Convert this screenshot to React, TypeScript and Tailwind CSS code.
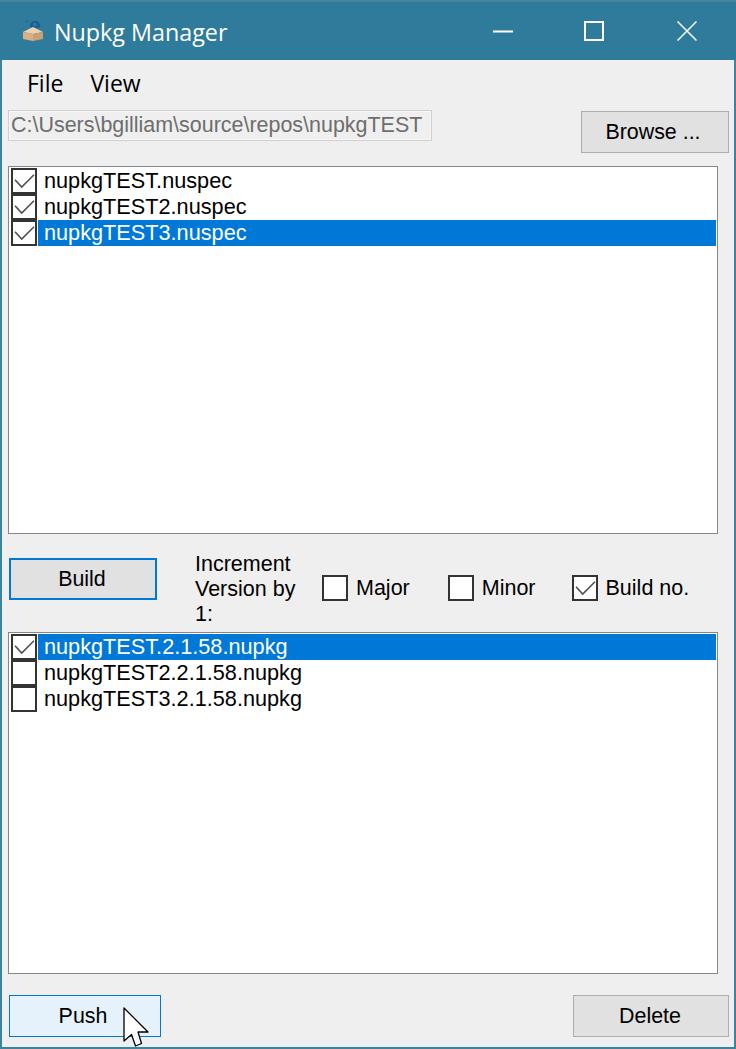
import React from "react";

const sans = "font-['Liberation_Sans',Arial,sans-serif]";

function CheckBox({ checked, white = true }: { checked?: boolean; white?: boolean }) {
  return (
    <span className={`flex h-[26px] w-[26px] shrink-0 items-center justify-center border-2 border-[#333333] ${white ? "bg-white" : ""}`}>
      {checked && (
        <svg width="22" height="22" viewBox="0 0 22 22" fill="none">
          <path d="M2 9.7 L8.7 17 L21 4.7" stroke="#505050" strokeWidth="1.6" />
        </svg>
      )}
    </span>
  );
}

function ListBox({ items, className }: { items: { label: string; checked: boolean; selected: boolean }[]; className: string }) {
  return (
    <div className={`ml-[6px] w-[710px] border border-[#828790] bg-white py-px pl-[2px] pr-px ${className}`}>
      {items.map((it) => (
        <div key={it.label} className="flex h-[26px] items-stretch">
          <CheckBox checked={it.checked} />
          <div className={`ml-px flex-1 pl-[6px] text-[21.7px] leading-[26px] ${it.selected ? "bg-[#0078d7] text-white" : "text-black"}`}>{it.label}</div>
        </div>
      ))}
    </div>
  );
}

function Option({ label, checked, className }: { label: string; checked?: boolean; className: string }) {
  return (
    <div className={`flex items-center gap-2 text-[21.5px] leading-[26px] text-black ${className}`}>
      <CheckBox checked={checked} />
      <span>{label}</span>
    </div>
  );
}

export default function App() {
  return (
    <div className={`flex h-[1049px] w-[736px] flex-col border-x-2 border-b-2 border-[#3a84a2] bg-[#efefef] ${sans}`}>
      <header className="-mx-[2px] flex h-[60px] shrink-0 items-center border-t-2 border-[#45869f] bg-[#2f7b9b] pr-[39px] text-white">
        <svg className="mb-[3px] ml-[23px]" width="20" height="22" viewBox="0 0 20 22">
          <circle cx="4" cy="2.5" r="1" fill="#1f5f95" />
          <path d="M7 7 C7 3 10 2 13 2 C16 2 17 5 17 8 L14 9 L7 8 Z" fill="#175d96" />
          <path d="M10 4 L13 4 L14 7 L10 7 Z" fill="#2f7b9b" />
          <path d="M0 13 L10 8 L20 13 L10 15 Z" fill="#ecd2ac" />
          <path d="M0 13 L10 15 L10 22 L0 20 Z" fill="#d9b083" />
          <path d="M10 15 L20 13 L20 20 L10 22 Z" fill="#c9a076" />
        </svg>
        <span className="ml-[11px] pt-[3px] font-['Open_Sans',sans-serif] text-[23.3px] leading-none">Nupkg Manager</span>
        <svg className="ml-auto" width="20" height="3" viewBox="0 0 20 3"><rect width="20" height="2" y="0.5" fill="#fff" /></svg>
        <span className="ml-[71px] h-[20px] w-[20px] border-2 border-white" />
        <svg className="ml-[73px]" width="20" height="20" viewBox="0 0 20 20" fill="none">
          <path d="M0.5 0.5 L19.5 19.5 M19.5 0.5 L0.5 19.5" stroke="#fff" strokeWidth="1.5" />
        </svg>
      </header>

      <nav className="flex h-[48px] shrink-0 items-center pb-[2px] pl-[25px] font-['Open_Sans',sans-serif] text-[23px] leading-none text-black">
        <span>File</span>
        <span className="ml-[27px]">View</span>
      </nav>

      <div className="flex h-[45px] shrink-0 items-start pl-[6px]">
        <div className="mt-[2px] flex h-[31px] w-[424px] items-center whitespace-nowrap border border-[#d0d0d0] pl-[2px] text-[21.46px] text-[#6d6d6d] shadow-[inset_0_0_0_1px_#f7f7f7]">
          C:\Users\bgilliam\source\repos\nupkgTEST
        </div>
        <button className="ml-[149px] mt-[3px] h-[42px] w-[148px] border border-[#adadad] bg-[#e1e1e1] pr-[4px] text-[21.4px] text-black">Browse ...</button>
      </div>

      <ListBox
        className="mt-[13px] h-[368px] shrink-0"
        items={[
          { label: "nupkgTEST.nuspec", checked: true, selected: false },
          { label: "nupkgTEST2.nuspec", checked: true, selected: false },
          { label: "nupkgTEST3.nuspec", checked: true, selected: true },
        ]}
      />

      <div className="flex h-[98px] shrink-0 items-start pl-[7px]">
        <button className="mt-[24px] h-[42px] w-[148px] border-2 border-[#0078d7] bg-[#e1e1e1] pr-[2px] text-[21.4px] text-black">Build</button>
        <div className="ml-[38px] mt-[18px] w-[110px] text-[21.5px] leading-[25px] text-black">Increment Version by 1:</div>
        <Option label="Major" className="ml-[17px] mt-[41px]" />
        <Option label="Minor" className="ml-[38px] mt-[41px]" />
        <Option label="Build no." checked className="ml-[36px] mt-[41px]" />
      </div>

      <ListBox
        className="h-[342px] shrink-0"
        items={[
          { label: "nupkgTEST.2.1.58.nupkg", checked: true, selected: true },
          { label: "nupkgTEST2.2.1.58.nupkg", checked: false, selected: false },
          { label: "nupkgTEST3.2.1.58.nupkg", checked: false, selected: false },
        ]}
      />

      <div className="mt-[21px] flex h-[42px] shrink-0 justify-between pl-[7px] pr-[5px]">
        <div className="relative">
          <button className="h-[42px] w-[152px] border border-[#0078d7] bg-[#e5f1fb] pr-[4px] text-[21.4px] text-black">Push</button>
          <svg className="absolute left-[114px] top-[11px]" width="27" height="41" viewBox="0 0 27 41">
            <path d="M1 2 L1 35 L8.5 28.5 L12.5 40 L18.5 37.5 L15 26 L25 26 Z" fill="#fff" stroke="#000" strokeWidth="1.3" strokeLinejoin="round" />
          </svg>
        </div>
        <button className="h-[42px] w-[156px] border border-[#adadad] bg-[#e1e1e1] pr-[2px] text-[21.4px] text-black">Delete</button>
      </div>
    </div>
  );
}
